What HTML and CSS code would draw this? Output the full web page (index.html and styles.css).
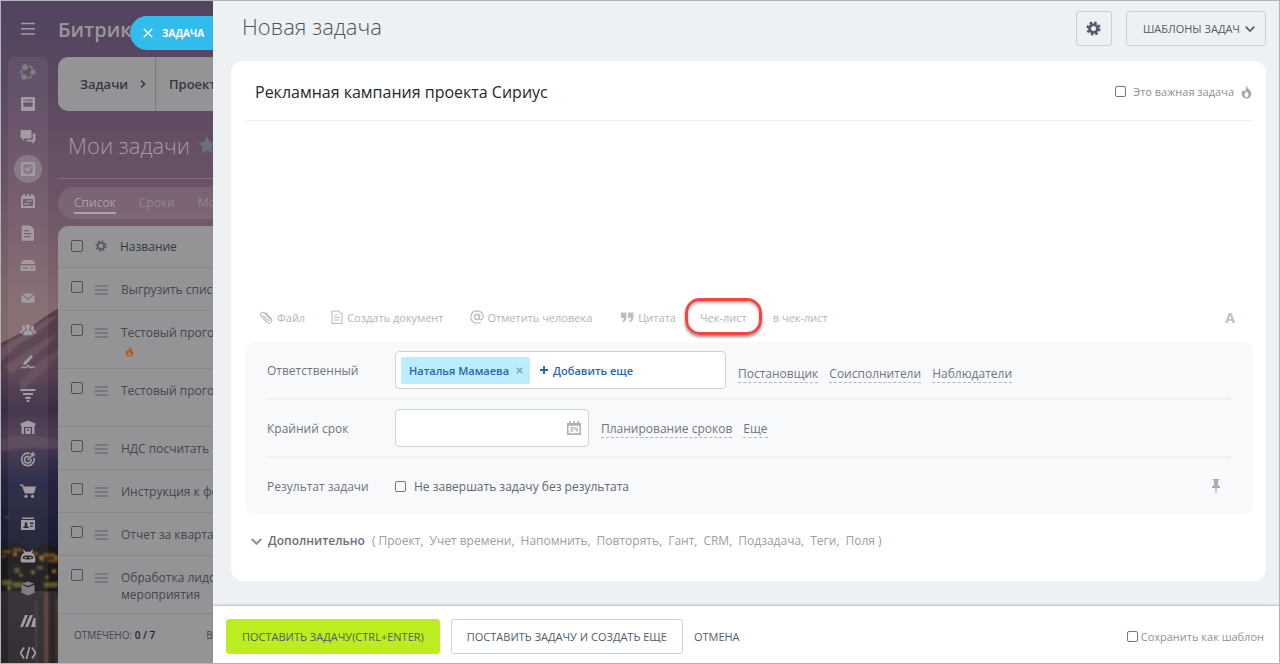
FILE: index.html
```html
<!DOCTYPE html>
<html lang="ru">
<head>
<meta charset="utf-8">
<title>Новая задача</title>
<link rel="stylesheet" href="styles.css">
</head>
<body>
<div class="app">
  <aside class="backdrop">
    <svg class="scene" viewBox="0 0 212 664" preserveAspectRatio="none" aria-hidden="true">
      <defs>
        <linearGradient id="sky" x1="0" y1="0" x2="0" y2="1">
          <stop offset="0" stop-color="#51445e"/><stop offset=".14" stop-color="#5c4961"/><stop offset=".3" stop-color="#6d5568"/><stop offset=".46" stop-color="#80696c"/><stop offset=".53" stop-color="#84696a"/>
        </linearGradient>
        <linearGradient id="hill" x1="0" y1="0" x2="0" y2="1">
          <stop offset="0" stop-color="#533c45"/><stop offset=".2" stop-color="#543e50"/><stop offset=".3" stop-color="#3b2c44"/><stop offset=".37" stop-color="#4b3950"/><stop offset=".5" stop-color="#252440"/><stop offset=".7" stop-color="#171a2c"/>
        </linearGradient>
        <linearGradient id="water" x1="0" y1="0" x2="0" y2="1">
          <stop offset="0" stop-color="#2f2a30"/><stop offset="1" stop-color="#272327"/>
        </linearGradient>
        <filter id="soft"><feGaussianBlur stdDeviation="1.2"/></filter>
      </defs>
      <rect width="212" height="664" fill="url(#sky)"/>
      <path d="M0 343 18 334 32 325 48 314 58 308 80 300V664H0z" fill="url(#hill)"/>
      <g filter="url(#soft)">
        <path d="M0 347 25 333 50 317 58 315 36 333 14 347 0 361z" fill="#67515c"/>
        <path d="M4 366 28 350 50 337 58 335 34 355 10 375z" fill="#705764" opacity=".6"/>
        <path d="M18 382 40 360 58 349V356L34 380 20 392z" fill="#6d5261" opacity=".5"/>
        <path d="M-4 441Q20 431 62 441V450Q25 446-4 453z" fill="#67505f" opacity=".5"/>
      </g>
      <path d="M0 548 15 543 30 551 45 544 58 549V598H0z" fill="#1a171a"/>
      <g filter="url(#soft)">
        <g fill="#a86920">
          <path d="M2 551h7v3H2zM12 549h9v3h-9zM27 553h10v3H27zM42 554h12v4H42zM47 560h10v3H47zM1 556h4v2H1z" opacity=".6"/>
          <circle cx="6" cy="518" r="1.5" opacity=".5"/><circle cx="14" cy="555" r="2"/><circle cx="40" cy="558" r="2"/><circle cx="53" cy="572" r="2"/><circle cx="46" cy="578" r="1.5"/><circle cx="20" cy="576" r="1.5"/>
        </g>
        <g fill="#76732e">
          <path d="M1 581h10v5H1zM12 583h11v5H12zM36 567h6v3h-6zM43 583h14v5H43z" opacity=".7"/>
          <circle cx="16" cy="571" r="3" opacity=".6"/><circle cx="32" cy="573" r="2"/><circle cx="41" cy="560" r="2"/><circle cx="55" cy="558" r="2"/><circle cx="8" cy="589" r="2"/>
        </g>
      </g>
      <path d="M0 592H58V664H0z" fill="url(#water)"/>
      <g filter="url(#soft)">
        <path d="M43 593h5v75h-5zM55 598h2v70h-2z" fill="#6d4b30" opacity=".6"/>
        <path d="M34 602h2v66h-2z" fill="#645b62" opacity=".4"/>
      </g>
    </svg>

    <nav class="rail" aria-label="Главное меню">
      <button class="rail-menu" aria-label="Меню"><svg viewBox="0 0 16 16"><path d="M1 2.500h14M1 7.800h14M1 13h14" stroke="currentColor" stroke-width="1.400" fill="none"/></svg></button>
      <div class="rail-list">
        <button class="dim" aria-label="Сеть"><svg viewBox="0 0 16 16"><g fill="currentColor"><circle cx="5" cy="3.300" r="3"/><circle cx="13" cy="8.200" r="2.600"/><circle cx="4.200" cy="13" r="2.800"/></g><path d="M9 2.200q3 .8 3.600 3M1.800 6q-1 2 .5 4.600M7.500 14.200q3 .2 4.300-2.500" stroke="currentColor" stroke-width="1.800" fill="none"/></svg></button>
        <button aria-label="Лента"><svg viewBox="0 0 16 16"><path fill="currentColor" fill-rule="evenodd" d="M2 1h12a1 1 0 0 1 1 1v12a1 1 0 0 1-1 1H2a1 1 0 0 1-1-1V2a1 1 0 0 1 1-1zM3.500 3.500v1.300h2V3.500zM6.500 3.500v1.300h6V3.500zM3.500 6.500v4.200h9V6.500z"/></svg></button>
        <button aria-label="Чаты"><svg viewBox="0 0 16 16"><path fill="currentColor" d="M1.500 1h9a1 1 0 0 1 1 1v6.500a1 1 0 0 1-1 1H4.800L2.500 12V9.500h-1a1 1 0 0 1-1-1V2a1 1 0 0 1 1-1zM12.800 4.500h1.700a1 1 0 0 1 1 1v6a1 1 0 0 1-1 1h-.7V15l-2.800-2.500H7.500a1 1 0 0 1-1-1v-.7h5.300a1 1 0 0 0 1-1z"/></svg></button>
        <button class="current" aria-label="Задачи"><svg viewBox="0 0 16 16"><path fill="currentColor" fill-rule="evenodd" d="M2 1h12a1 1 0 0 1 1 1v12a1 1 0 0 1-1 1H2a1 1 0 0 1-1-1V2a1 1 0 0 1 1-1zM3.300 3.300v7.500l2 2h5.400l2-2V3.300z"/><path d="m5.300 7.500 2.200 2.200 3.700-4" stroke="currentColor" stroke-width="1.800" fill="none"/></svg></button>
        <button aria-label="Календарь"><svg viewBox="0 0 16 16"><path fill="currentColor" fill-rule="evenodd" d="M1 3h2V1h2v2h2V1h2v2h2V1h2v2h2v12H1zM3 6v7h10V6z"/><path d="M6.500 8h5.500M4.300 10.800h5.500" stroke="currentColor" stroke-width="1.600" stroke-dasharray="1.600 .5"/></svg></button>
        <button aria-label="Документы"><svg viewBox="0 0 16 16"><path fill="currentColor" fill-rule="evenodd" d="M2.500.5h7.700l3.800 3.800V15a.8.8 0 0 1-.8.8H2.500A.8.8 0 0 1 1.700 15V1.300A.8.8 0 0 1 2.500.5zM4 5v1.300h5V5zM4 8v1.300h7.500V8zM4 11v1.300h6V11z"/></svg></button>
        <button aria-label="Диск"><svg viewBox="0 0 16 16"><path fill="currentColor" fill-rule="evenodd" d="M3.300 2h9.400L15.500 6H.5zM.5 7.500h15V13H.5zM3 9.500v1.300h5V9.500zM11 9.500v1.300h2V9.500z"/></svg></button>
        <button aria-label="Почта"><svg viewBox="0 0 16 16"><path fill="currentColor" d="M2 3.500h12L8 8.300zM1.500 4.800 8 10l6.500-5.200v8h-13z"/></svg></button>
        <button aria-label="Группы"><svg viewBox="0 0 18 16"><path fill="currentColor" d="M9 1.500c2 0 2.800 1.500 2.300 3.500-.4 1.500-.9 2.200-1 2.700 0 1 3 1.300 3.700 2.700l.5 3.600h-11l.5-3.600C4.700 9 7.700 8.700 7.700 7.700c-.1-.5-.6-1.200-1-2.700C6.200 3 7 1.500 9 1.500zM4 3c1 0 1.500.6 1.600 1.700.2 1.500.7 2.600.9 3.300C4.200 8.800 3 9.500 2.600 12H0l.3-2C.8 8.600 2.900 8.500 3 7.800 2 6 1.800 3 4 3zm10 0c-1 0-1.500.6-1.600 1.700-.2 1.500-.7 2.600-.9 3.300 2.300.8 3.500 1.500 3.900 4H18l-.3-2c-.5-1.400-2.600-1.500-2.700-2.200C16 6 16.200 3 14 3z"/></svg></button>
        <button aria-label="Подпись"><svg viewBox="0 0 16 16"><path fill="currentColor" d="m11 1 2 1.800-6.500 7.400L3 11.500l1.200-3.700z"/><path d="M1 13.500h5q2-3 3-1 .5 1.800 3 .5h3" stroke="currentColor" stroke-width="1.700" fill="none"/></svg></button>
        <button aria-label="Воронка"><svg viewBox="0 0 16 16"><path stroke="currentColor" stroke-width="2.200" d="M.5 3h15M3 7h10M5.300 10.800h5.400M6.700 14h2.600"/></svg></button>
        <button aria-label="Склад"><svg viewBox="0 0 16 16"><path fill="currentColor" fill-rule="evenodd" d="M8 1.500 15.500 4.500v2h-1V15h-13V6.500h-1v-2zM4 8v7h8V8z"/><path fill="currentColor" fill-rule="evenodd" d="M5.300 9h5.400v6H5.300zM7 10.500v1.500h2v-1.500z"/></svg></button>
        <button aria-label="Цели"><svg viewBox="0 0 16 16"><path d="M10 2.500a6.300 6.300 0 1 0 4 4.500M9 5.600a3.300 3.300 0 1 0 2 2.300M7.600 8.900 13 3.500" stroke="currentColor" stroke-width="1.700" fill="none"/><path fill="currentColor" d="m10.700 2.800 2.600-2.300.3 2.100 2.100.3-2.300 2.600h-2.200z"/></svg></button>
        <button aria-label="Магазин"><svg viewBox="0 0 16 16"><path fill="currentColor" d="M0 1.500h3l.8 2H16l-2 7H4.800L2 3H0z"/><circle cx="6" cy="13.300" r="1.600" fill="currentColor"/><circle cx="12.500" cy="13.300" r="1.600" fill="currentColor"/></svg></button>
        <button aria-label="Контакты"><svg viewBox="0 0 16 16"><path fill="currentColor" fill-rule="evenodd" d="M2 1.500h12V3H2zM1 4h14v10H1zM3 12h6q-.3-1.700-2-2 1-3.500-1-3.700Q4 6.500 5 10q-1.800.3-2 2zM10 6.500V8h3.500V6.500zM10 9.500v1.300h3V9.500z"/></svg></button>
        <button aria-label="Роботы"><svg viewBox="0 0 16 16"><path fill="currentColor" fill-rule="evenodd" d="m3.800 1.500 1.700 2.300h5L12.200 1.500l.9.700-1.300 2.400Q15.500 7 15.500 13l-1 1.500h-13L.5 13Q.5 7 4.200 4.600L2.900 2.200zM5 7.500Q2.300 8 2.700 10.500 8 12.500 13.300 10.500 13.700 8 11 7.500zM4.500 9h2.300v1.300H4.500zM9.200 9h2.300v1.300H9.200z"/></svg></button>
        <button class="dim" aria-label="Приложения"><svg viewBox="0 0 16 16"><path fill="currentColor" d="m8 1.500 6 2L8 6 2 3.500zM1.500 4.800 8 7.300l6.500-2.500v8L8 15.500l-6.500-2.700z"/></svg></button>
        <button aria-label="Маркетинг"><svg viewBox="0 0 16 16"><path fill="currentColor" d="M5 2h3L3 14H0zM10 2h3L8 14H5zM13.500 5h2v9h-4.500z"/></svg></button>
        <button aria-label="Разработчикам"><svg viewBox="0 0 16 16"><path stroke="currentColor" stroke-width="1.800" fill="none" d="M4 2.500.9 7.300v1.400L4 13.500M12 2.500l3.100 4.800v1.400L12 13.500M9.500 2l-3 12"/></svg></button>
      </div>
    </nav>

    <div class="workspace">
      <div class="brand">Битрикс</div>
      <nav class="sections">
        <a href="#" class="section-main">Задачи <svg viewBox="0 0 8 10"><path d="m2 1.500 3.500 3.500L2 8.500" stroke="currentColor" stroke-width="1.500" fill="none"/></svg></a>
        <a href="#">Проекты</a>
      </nav>
      <div class="list-title"><h2>Мои задачи</h2><svg viewBox="0 0 16 16"><path fill="currentColor" d="m8 0 2.300 5.400 5.700.6-4.300 3.800 1.300 5.700L8 12.500l-5 3 1.300-5.700L0 6l5.700-.6z"/></svg></div>
      <nav class="tabs"><a href="#" class="active">Список</a><a href="#">Сроки</a><a href="#">Мой план</a></nav>
      <div class="grid-box">
        <table class="grid">
          <thead><tr><th class="c-check"><input type="checkbox" aria-label="Выбрать все"></th><th class="c-handle"><svg class="gear" viewBox="0 0 16 16"><circle cx="8" cy="8" r="4.200" fill="none" stroke="currentColor" stroke-width="2.200"/><circle cx="8" cy="8" r="6.300" fill="none" stroke="currentColor" stroke-width="2.600" stroke-dasharray="2.300 2.648"/></svg></th><th>Название</th></tr></thead>
          <tbody>
            <tr><td><input type="checkbox" aria-label="Выбрать"></td><td><i class="handle"></i></td><td>Выгрузить список</td></tr>
            <tr class="tall"><td><input type="checkbox" aria-label="Выбрать"></td><td><i class="handle"></i></td><td>Тестовый прогон<svg class="hot" viewBox="0 0 16 20"><path fill="currentColor" fill-rule="evenodd" d="M8.500 0q.5 4 3.500 6.500Q16 10 14.500 15 13 19.500 8 19.500T1.500 15Q0 10 3 7l1.500 2.500Q8 6 8.500 0zM8 10q-3 3.500-2.500 6 .7 2 2.500 2t2.500-2Q11 13.500 8 10z"/></svg></td></tr>
            <tr class="tall"><td><input type="checkbox" aria-label="Выбрать"></td><td><i class="handle"></i></td><td>Тестовый прогон</td></tr>
            <tr><td><input type="checkbox" aria-label="Выбрать"></td><td><i class="handle"></i></td><td>НДС посчитать</td></tr>
            <tr><td><input type="checkbox" aria-label="Выбрать"></td><td><i class="handle"></i></td><td>Инструкция к форме</td></tr>
            <tr><td><input type="checkbox" aria-label="Выбрать"></td><td><i class="handle"></i></td><td>Отчет за квартал</td></tr>
            <tr class="tall"><td><input type="checkbox" aria-label="Выбрать"></td><td><i class="handle"></i></td><td>Обработка лидов<br>мероприятия</td></tr>
          </tbody>
        </table>
        <div class="totals"><span>ОТМЕЧЕНО: <b>0 / 7</b></span><span>ВСЕГО: 7</span></div>
      </div>
    </div>
    <button class="slider-tab"><svg viewBox="0 0 10 10"><path d="m.7.700 8.600 8.600M9.300.700.700 9.300" stroke="currentColor" stroke-width="1.400"/></svg>ЗАДАЧА</button>
  </aside>

  <main class="panel">
    <header class="panel-head">
      <h1>Новая задача</h1>
      <button class="btn square" aria-label="Настройки"><svg class="gear" viewBox="0 0 16 16"><circle cx="8" cy="8" r="4.200" fill="none" stroke="currentColor" stroke-width="3"/><circle cx="8" cy="8" r="6.300" fill="none" stroke="currentColor" stroke-width="2.600" stroke-dasharray="2.700 2.248"/></svg></button>
      <button class="btn templates">ШАБЛОНЫ ЗАДАЧ<svg viewBox="0 0 10 6"><path d="m.7.700 4.300 4.300L9.300.700" stroke="currentColor" stroke-width="1.700" fill="none"/></svg></button>
    </header>

    <form class="card">
      <div class="title-row">
        <input class="title-input" type="text" value="Рекламная кампания проекта Сириус" aria-label="Название задачи">
        <label class="important"><input type="checkbox"><span>Это важная задача</span><svg viewBox="0 0 16 20"><path fill="currentColor" fill-rule="evenodd" d="M8.500 0q.5 4 3.500 6.500Q16 10 14.500 15 13 19.500 8 19.500T1.500 15Q0 10 3 7l1.500 2.500Q8 6 8.500 0zM8 9q-3.500 4-2.800 6.500.8 2 2.800 2t2.800-2Q11.500 13 8 9z"/></svg></label>
      </div>
      <textarea class="description" aria-label="Описание"></textarea>
      <div class="toolbar">
        <button type="button" class="t-file"><svg viewBox="0 0 14 15"><path d="M4 5.500 8.700 10q1.300.8 2-.2.500-1-.3-1.800L5.500 3Q3.800 1.800 2.200 3.200 1 4.800 2.200 6.300L8 12.200q2 1.800 4 .2 1.600-2 0-4L6.500 2.500" fill="none" stroke="currentColor" stroke-width="1.200"/></svg>Файл</button>
        <button type="button" class="t-doc"><svg viewBox="0 0 12 15"><path d="M1 1h7l3 3v9.500H1z M3 5h3M3 7.500h6M3 10h6" fill="none" stroke="currentColor" stroke-width="1.200"/></svg>Создать документ</button>
        <button type="button" class="t-user"><svg viewBox="0 0 14 14"><circle cx="7" cy="7" r="2.500" fill="none" stroke="currentColor" stroke-width="1.300"/><path d="M9.800 4 9.300 8q0 1.800 1.500 1.800 2.200-.3 2.400-2.800Q13 1 7 .8 1 1 .8 7 1 13 7 13.200q2 0 3.700-1" fill="none" stroke="currentColor" stroke-width="1.300"/></svg>Отметить человека</button>
        <button type="button" class="t-quote"><svg viewBox="0 0 13 11"><path fill="currentColor" d="M0 .5h5.500v5Q5 9.500 1.500 10.500v-2Q3 7.500 3 6H0zM7 .5h5.500v5Q12 9.500 8.500 10.500v-2Q10 7.500 10 6H7z"/></svg>Цитата</button>
        <button type="button" class="t-check">Чек-лист</button>
        <button type="button" class="t-into">в чек-лист</button>
        <button type="button" class="t-format" aria-label="Форматирование">А</button>
      </div>

      <section class="fields">
        <div class="field">
          <span class="label">Ответственный</span>
          <div class="people"><span class="person">Наталья Мамаева<button type="button" aria-label="Убрать"><svg viewBox="0 0 8 8"><path d="m1 1 6 6M7 1 1 7" stroke="currentColor" stroke-width="1.700"/></svg></button></span><button type="button" class="add"><svg viewBox="0 0 8 8"><path d="M4 0v8M0 4h8" stroke="currentColor" stroke-width="1.800"/></svg>Добавить еще</button></div>
          <div class="links people-links"><a href="#">Постановщик</a><a href="#">Соисполнители</a><a href="#">Наблюдатели</a></div>
        </div>
        <div class="field">
          <label class="label" for="deadline">Крайний срок</label>
          <div class="date"><input id="deadline" type="text"><svg viewBox="0 0 14 14"><path fill="currentColor" fill-rule="evenodd" d="M0 2h2V0h1.500v2h2.700V0h1.600v2h2.700V0H12v2h2v12H0zM1.500 4.800v7.500h11V4.800z"/><path d="M3.500 6.500h2.700v1.700H4v2h2.500M8 6v2.500h2.600M10 6v5" fill="none" stroke="currentColor" stroke-width="1"/></svg></div>
          <div class="links"><a href="#">Планирование сроков</a><a href="#">Еще</a></div>
        </div>
        <div class="field">
          <span class="label">Результат задачи</span>
          <label class="result"><input type="checkbox">Не завершать задачу без результата</label>
          <button type="button" class="pin" aria-label="Закрепить"><svg viewBox="0 0 8 15"><path fill="currentColor" d="M1 0h6v1.500H6V6l2 1.500V9H4.700L4.300 15h-.6L3.300 9H0V7.500L2 6V1.500H1z"/></svg></button>
        </div>
      </section>

      <div class="more"><svg viewBox="0 0 10 6"><path d="m.7.700 4.300 4.300L9.300.700" stroke="currentColor" stroke-width="1.900" fill="none"/></svg><button type="button">Дополнительно</button><div class="more-list"><span>( Проект,</span><span>Учет времени,</span><span>Напомнить,</span><span>Повторять,</span><span>Гант,</span><span>CRM,</span><span>Подзадача,</span><span>Теги,</span><span>Поля )</span></div></div>
    </form>

    <footer class="actions">
      <button class="btn primary">ПОСТАВИТЬ ЗАДАЧУ(CTRL+ENTER)</button>
      <button class="btn second">ПОСТАВИТЬ ЗАДАЧУ И СОЗДАТЬ ЕЩЕ</button>
      <button class="cancel">ОТМЕНА</button>
      <label class="as-template"><input type="checkbox">Сохранить как шаблон</label>
    </footer>
  </main>
</div>
</body>
</html>
```
FILE: styles.css
```css
* { box-sizing: border-box; }
body { margin: 0; font-family: "Open Sans", "Noto Sans", sans-serif; font-size: 12px; color: #535c69; }
button, input, textarea { font: inherit; color: inherit; margin: 0; padding: 0; }
button { background: none; border: 0; cursor: pointer; white-space: nowrap; }
a { color: inherit; text-decoration: none; }
svg { display: block; flex: none; }
h1, h2 { margin: 0; font-weight: 300; }
input[type="checkbox"] { appearance: none; flex: none; width: 11px; height: 11px; border: 1px solid #767676; border-radius: 2px; background: transparent; }

.app { display: flex; height: 100vh; border: 1px solid #b1b4b6; overflow: hidden; }

.backdrop { position: relative; flex: none; width: 212px; display: flex; overflow: hidden; color: #a29ba2; }
.scene { position: absolute; inset: 0; width: 100%; height: 100%; }
.rail, .workspace { position: relative; }
.rail { flex: none; width: 57px; display: flex; flex-direction: column; padding: 0 10px 0 7px; }
.rail svg { width: 16px; height: 16px; }
.rail button { display: grid; place-items: center; }
.rail-menu { height: 56px; }
.rail-list { flex: 1; display: flex; flex-direction: column; justify-content: space-between; align-items: center; margin-bottom: -4px; padding-top: 1px; border-radius: 8px 8px 0 0; background: rgba(255, 255, 255, .06); }
.rail-list button { width: 28px; height: 28px; border-radius: 50%; }
.rail-list .current { background: rgba(255, 255, 255, .18); }
.rail-list .dim { color: #827c84; }

.workspace { flex: none; width: 500px; }
.brand { height: 56px; padding-top: 14px; font-size: 20px; line-height: 30px; font-weight: 600; color: #9b949c; }
.sections { display: flex; height: 54px; border-radius: 10px 0 0 10px; background: #949496; color: #33383f; font-size: 13px; font-weight: 600; }
.sections a { display: flex; align-items: center; padding: 0 13px; }
.sections .section-main { width: 98px; justify-content: space-between; padding: 0 8px 0 22px; border-right: 1px solid #7c7a80; }
.sections svg { width: 8px; height: 10px; }
.list-title { display: flex; align-items: center; gap: 8px; height: 68px; padding-left: 10px; border-bottom: 1px solid #80707c; }
.list-title h2 { font-size: 22px; }
.list-title svg { width: 18px; height: 18px; color: #6c7078; }
.tabs { display: flex; gap: 23px; height: 32px; margin: 8px 0 7px; padding: 4px 16px; border-radius: 16px; background: rgba(255, 255, 255, .09); font-size: 12px; line-height: 24px; color: #93848f; }
.tabs a { height: 23px; }
.tabs .active { color: #aaa1a9; border-bottom: 2px solid #aaa1a9; }
.grid-box { height: 450px; border-radius: 10px 0 0 0; background: #949496; color: #43474e; }
.grid { border-collapse: collapse; table-layout: fixed; width: 100%; font-size: 12px; line-height: 17px; }
.grid th { height: 41px; padding: 0; text-align: left; font-weight: 400; color: #33383f; border-bottom: 1px solid #88888a; }
.grid td { height: 43px; padding: 13px 0 0 1px; vertical-align: top; border-bottom: 1px solid #88888a; }
.grid .tall td { height: 58px; }
.grid .c-check { width: 37px; }
.grid .c-handle { width: 25px; }
.grid th:first-child { padding-left: 13px; }
.grid td:first-child { padding: 13px 0 0 13px; }
.grid td:nth-child(2) { padding: 17px 0 0; }
.grid input { display: block; width: 12px; height: 12px; border-color: #4e5054; }
.grid .gear { width: 12px; height: 12px; color: #55595f; }
.handle { display: block; width: 13px; height: 10px; background: repeating-linear-gradient(#77797f 0 2px, transparent 2px 4px); }
.hot { width: 9px; height: 11px; margin: 5px 0 0 4px; color: #b55a1c; }
.totals { display: flex; gap: 51px; padding: 14px 0 0 16px; font-size: 10px; line-height: 14px; }
.totals b { color: #1e2024; font-weight: 600; }
.slider-tab { position: absolute; right: 0; top: 15px; display: flex; align-items: center; gap: 9px; width: 83px; height: 34px; padding-left: 13px; border-radius: 17px 0 0 17px; background: #32bcec; color: #fff; font-size: 10px; font-weight: 700; }
.slider-tab svg { width: 10px; height: 10px; }

.panel { flex: 1; min-width: 0; display: flex; flex-direction: column; background: #edf1f4; }
.panel-head { display: flex; align-items: center; gap: 14px; padding: 10px 13px 15px 29px; }
.panel-head h1 { flex: 1; align-self: flex-start; font-size: 22px; line-height: 30px; color: #505357; }
.btn { height: 35px; border: 1px solid #c9cfd4; border-radius: 3px; font-size: 11px; font-weight: 500; color: #535c69; }
.square { display: grid; place-items: center; width: 36px; }
.square svg { width: 15px; height: 15px; }
.templates { display: flex; align-items: center; gap: 5px; padding: 0 10px 0 16px; }
.templates svg { width: 10px; height: 6px; }

.card { display: flex; flex-direction: column; margin: 0 13px 0 18px; padding: 0 13px 31px 14px; border-radius: 12px; background: #fff; }
.title-row { display: flex; align-items: center; height: 60px; padding: 2px 1px 0 10px; border-bottom: 1px solid #edeff1; }
.title-input { flex: 1; min-width: 0; border: 0; outline: 0; font-size: 16px; color: #26282b; }
.important { display: flex; align-items: center; gap: 7px; font-size: 11px; color: #8c9096; }
.important svg { width: 11px; height: 14px; color: #a4a8ad; }
.description { height: 179px; border: 0; outline: 0; resize: none; }
.toolbar { display: flex; align-items: center; height: 42px; padding: 0 18px 10px 14px; font-size: 11px; color: #b1b5bb; }
.toolbar button { display: flex; align-items: center; gap: 4px; height: 34px; padding-top: 2px; }
.toolbar svg { color: #bcc0c6; }
.t-file svg { width: 14px; height: 15px; }
.t-doc { margin-left: 26px; }
.t-doc svg { width: 12px; height: 15px; }
.t-user { margin-left: 26px; }
.t-user svg { width: 14px; height: 14px; }
.t-quote { margin-left: 29px; }
.t-quote svg { width: 13px; height: 11px; }
.toolbar .t-check { height: 37px; margin-left: 9px; padding: 2px 12px 0; border: 3px solid #f44542; border-radius: 15px; box-shadow: 0 2px 3px rgba(0, 0, 0, .45), inset 0 2px 3px rgba(0, 0, 0, .3); }
.t-into { margin-left: 11px; }
.toolbar .t-format { margin-left: auto; font-size: 14px; font-weight: 700; color: #bcc1c8; }

.fields { padding: 0 22px; border-radius: 10px; background: #f8f9fb; }
.field { display: flex; align-items: center; height: 58px; border-bottom: 2px solid #eff1f3; }
.field:last-child { height: 56px; border-bottom: 0; }
.label { flex: none; width: 128px; font-size: 12px; color: #70757f; }
.people, .date { display: flex; align-items: center; height: 38px; border: 1px solid #cdd3d9; border-radius: 4px; background: #fff; }
.people { width: 331px; padding: 0 5px; gap: 10px; font-size: 11px; font-weight: 600; color: #1f67b0; }
.person { display: flex; align-items: center; gap: 7px; height: 27px; padding: 0 7px 0 8px; border-radius: 2px; background: #bcedfc; }
.person button { color: #82a8b8; }
.person svg { width: 7px; height: 7px; }
.add { display: flex; align-items: center; gap: 5px; }
.add svg { width: 8px; height: 8px; }
.links { display: flex; gap: 11px; padding: 2px 0 0 12px; font-size: 12px; line-height: 16px; color: #70757f; }
.people-links { padding-top: 8px; }
.links a { border-bottom: 1px dashed #b3b7bd; white-space: nowrap; }
.date { width: 194px; padding-right: 7px; }
.date input { flex: 1; min-width: 0; border: 0; outline: 0; background: none; }
.date svg { width: 14px; height: 14px; color: #aab0b6; }
.result { display: flex; align-items: center; gap: 8px; color: #62676f; }
.pin { margin: 0 11px 0 auto; color: #a8adb3; }
.pin svg { width: 8px; height: 15px; }
.more { display: flex; align-items: center; margin-top: 18px; padding-left: 6px; line-height: 18px; color: #9a9ea5; }
.more > svg { width: 11px; height: 7px; color: #8d939b; }
.more button { margin-left: 6px; font-weight: 600; color: #6b707a; }
.more-list { display: flex; gap: 6px; margin-left: 7px; }

.actions { position: relative; display: flex; align-items: center; gap: 11px; height: 57px; margin-top: auto; padding: 4px 15px 0 13px; background: #fff; box-shadow: 0 -1px 2px rgba(100, 110, 120, .4); }
.primary, .second { padding: 0 15px; border-color: #c9d3d8; }
.primary { background: #bbed21; border-color: #bbed21; }
.cancel { font-size: 11px; font-weight: 500; }
.as-template { display: flex; align-items: center; gap: 3px; margin-left: auto; font-size: 11px; color: #8d929c; }
```
